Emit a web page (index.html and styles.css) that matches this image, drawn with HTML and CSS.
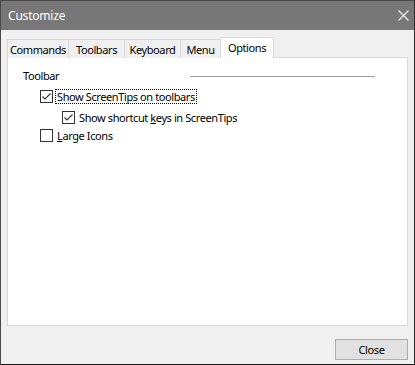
FILE: index.html
```html
<!DOCTYPE html>
<html>
<head>
<meta charset="utf-8">
<link rel="stylesheet" href="styles.css">
</head>
<body>
<div class="window">
  <div class="titlebar">
    <span class="title">Customize</span>
    <svg class="close-x" width="11" height="11" viewBox="0 0 11 11"><path d="M0.5 0.5 L10.5 10.5 M10.5 0.5 L0.5 10.5" stroke="#f2f2f2" stroke-width="1.2" fill="none"/></svg>
  </div>
  <div class="body">
    <div class="tabs">
      <div class="tab t-commands">Commands</div>
      <div class="tab t-toolbars">Toolbars</div>
      <div class="tab t-keyboard">Keyboard</div>
      <div class="tab t-menu">Menu</div>
      <div class="tab active t-options">Options</div>
    </div>
    <div class="panel">
      <div class="group-head">
        <span class="group-label">Toolbar</span>
        <span class="group-line"></span>
      </div>
      <div class="check-row lvl1 r1">
        <span class="box"><svg width="11" height="11" viewBox="0 0 11 11"><path d="M1.5 5.5 L4 8 L9.5 2.5" stroke="#333" stroke-width="1.1" fill="none"/></svg></span>
        <span class="label focus">Show ScreenTips on toolbars</span>
      </div>
      <div class="check-row lvl2 r2">
        <span class="box"><svg width="11" height="11" viewBox="0 0 11 11"><path d="M1.5 5.5 L4 8 L9.5 2.5" stroke="#333" stroke-width="1.1" fill="none"/></svg></span>
        <span class="label">Show shortcut <u>k</u>eys in ScreenTips</span>
      </div>
      <div class="check-row lvl1 r3">
        <span class="box"></span>
        <span class="label"><u>L</u>arge Icons</span>
      </div>
    </div>
    <div class="footer">
      <div class="button">Close</div>
    </div>
  </div>
</div>
</body>
</html>
```
FILE: styles.css
```css
html, body {
  margin: 0;
  padding: 0;
}
body {
  width: 415px;
  height: 365px;
  font-family: "Noto Sans", "Liberation Sans", Arial, sans-serif;
  font-size: 11px;
  letter-spacing: -0.4px;
  color: #000;
}
.window {
  box-sizing: border-box;
  width: 415px;
  height: 365px;
  border: 1px solid #4a4a4a;
  border-bottom-color: #1a1a1a;
  border-right-color: #2a2a2a;
  display: flex;
  flex-direction: column;
  background: #f0f0f0;
}
.titlebar {
  height: 29px;
  background: #777777;
  display: flex;
  align-items: center;
  justify-content: space-between;
  padding: 0 5px 0 7px;
  flex: none;
}
.title {
  color: #ffffff;
  font-size: 12px;
  letter-spacing: -0.2px;
  margin-top: -1px;
}
.close-x {
  margin-top: -1px;
}
.body {
  flex: 1;
  display: flex;
  flex-direction: column;
  padding: 7px 6px 4px 6px;
}
.tabs {
  display: flex;
  align-items: flex-end;
  height: 21px;
  margin-bottom: -1px;
  position: relative;
  z-index: 1;
}
.tab {
  box-sizing: border-box;
  height: 19px;
  border: 1px solid #d9d9d9;
  border-right: none;
  border-bottom: none;
  background: #f0f0f0;
  display: flex;
  align-items: center;
  justify-content: center;
  padding-top: 1px;
}
.t-commands { width: 61px; }
.t-toolbars { width: 56px; }
.t-keyboard { width: 56px; }
.t-menu { width: 40px; }
.t-options { width: 54px; }
.tab.active {
  height: 21px;
  background: #ffffff;
  border-right: 1px solid #d9d9d9;
  padding-top: 0;
  padding-bottom: 2px;
}
.panel {
  flex: 1;
  background: #ffffff;
  border: 1px solid #d9d9d9;
  padding: 10px 15px 0 15px;
}
.group-head {
  display: flex;
  align-items: center;
  height: 15px;
}
.group-label {
  width: 167px;
}
.group-line {
  width: 185px;
  height: 1px;
  background: #a0a0a0;
  margin-top: 1px;
}
.check-row {
  display: flex;
  align-items: center;
  height: 18px;
}
.r1 { margin-top: 4px; }
.r2 { margin-top: 3px; }
.r3 { margin-top: 0; }
.lvl1 { padding-left: 17px; }
.lvl2 { padding-left: 39px; }
.box {
  box-sizing: border-box;
  width: 13px;
  height: 13px;
  border: 1px solid #333333;
  background: #ffffff;
  display: flex;
  align-items: center;
  justify-content: center;
  flex: none;
}
.label {
  margin-left: 2px;
  padding: 0 1px;
  border: 1px solid transparent;
  line-height: 13px;
}
.label.focus {
  border: 1px dotted #000;
}
.label u {
  text-decoration: underline;
  text-underline-offset: 1px;
}
.footer {
  display: flex;
  justify-content: flex-end;
  padding-top: 13px;
  height: 21px;
  flex: none;
}
.button {
  box-sizing: border-box;
  width: 73px;
  height: 21px;
  background: #e1e1e1;
  border: 1px solid #adadad;
  display: flex;
  align-items: center;
  justify-content: center;
}
```
